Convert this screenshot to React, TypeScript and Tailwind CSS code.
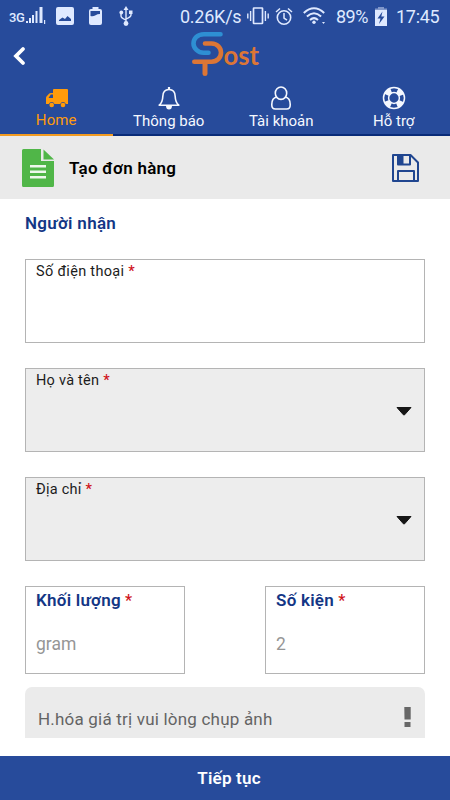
import type { ReactNode } from 'react';

function StatusBar() {
  return (
    <div className="flex h-8 items-center text-[#dfe9ff]">
      {/* Signal */}
      <span className="ml-[9px] mt-[3px] w-[17px] shrink-0 text-[13px] font-medium leading-none tracking-[-0.4px]">3G</span>
      <svg className="shrink-0" width="20" height="18" viewBox="16 0 20 18">
        <path d="M16 16v-2h2v2zM19 16v-5h2v5zM22 16V8h2v8zM25.500 16V4h2v12zM29.500 16V0h3v16zM34 13h1.200v4H34z" fill="currentColor" />
      </svg>
      {/* Screenshot saved */}
      <svg className="ml-[10px] shrink-0" width="18" height="18" viewBox="0 0 18 18">
        <path fillRule="evenodd" d="M2 0h14q2 0 2 2v14q0 2-2 2H2q-2 0-2-2V2q0-2 2-2zM3 14h12v-2l-3.500-3L9 12 6.500 10.500 3 13z" fill="currentColor" />
      </svg>
      <svg className="ml-[15px] shrink-0" width="13" height="18" viewBox="0 0 13 18">
        <path fillRule="evenodd" d="M3.500 0h6v2h1.500q2 0 2 2v12q0 2-2 2H2q-2 0-2-2V4q0-2 2-2h1.500zM1.500 4v5c3.500 1.500 5-2 9.500-2V4z" fill="currentColor" />
      </svg>
      {/* USB */}
      <svg className="ml-[17px] shrink-0" width="14" height="20" viewBox="0 0 14 20">
        <path d="M7 3v14M2 7v3q0 2 5 4M12 7v2q0 2-5 4" fill="none" stroke="currentColor" strokeWidth="1.400" />
        <path d="M7 0l2.500 4h-5zM10 4.500h3.500V8H10z" fill="currentColor" />
        <circle cx="2.300" cy="6.500" r="1.900" fill="currentColor" />
        <circle cx="7" cy="17.500" r="2.400" fill="currentColor" />
      </svg>
      <span className="ml-[47px] w-[62px] shrink-0 whitespace-nowrap text-[18px] tracking-[-0.25px]">0.26K/s</span>
      {/* Vibrate */}
      <svg className="ml-[5px] shrink-0" width="22" height="18" viewBox="0 0 22 18">
        <rect x="6.500" y="1" width="9" height="15.500" rx="0.500" fill="none" stroke="currentColor" strokeWidth="1.700" />
        <path d="M3.600 4v10M18.400 4v10M.8 6.500v5M21.200 6.500v5" stroke="currentColor" strokeWidth="1.400" />
      </svg>
      {/* Alarm */}
      <svg className="ml-[6px] shrink-0" width="18" height="19" viewBox="0 0 18 19">
        <circle cx="9" cy="10.500" r="6.700" fill="none" stroke="currentColor" strokeWidth="1.600" />
        <path d="M9 6v5l3 2.200M1 5l4-3.500M17 5l-4-3.500" fill="none" stroke="currentColor" strokeWidth="1.500" />
      </svg>
      {/* Wifi */}
      <svg className="ml-[10px] shrink-0" width="23" height="18" viewBox="0 0 23 18">
        <path d="M.8 6Q11 -3.500 21.200 6M3.900 9.500Q11 3 18.100 9.500M7 13Q11 9.300 15 13" fill="none" stroke="currentColor" strokeWidth="2" />
        <circle cx="11" cy="15.300" r="1.700" fill="currentColor" />
        <path d="M19 15h3l-1.500 2z" fill="currentColor" />
      </svg>
      <span className="ml-[10px] w-[34px] shrink-0 text-[18px] tracking-[-0.5px]">89%</span>
      <svg className="ml-[5px] shrink-0" width="12" height="19" viewBox="0 0 12 19">
        <path d="M3 0h6v1.500h3v1.500H0V1.500h3z" fill="#8197ca" />
        <path fillRule="evenodd" d="M0 3h12v16H0zM7.500 4.500L2.500 11.500h3L4 17l5.500-7.500H6.300z" fill="currentColor" />
      </svg>
      <span className="ml-[9px] text-[18px] tracking-[-0.3px]">17:45</span>
    </div>
  );
}

function Logo() {
  return (
    <svg className="absolute left-[190px] top-[-1px]" width="72" height="48" viewBox="190 31 72 48">
      <g fill="none" strokeWidth="4.600" strokeLinecap="round">
        <path d="M220.500 34.300H204C197 34.300 193.500 39 193.500 43.600S198 52.800 203.500 52.800H208.500" stroke="#2e8fd3" />
        <path d="M205 43.500H211.500C217.500 43.500 221 48 221 52.600S217.500 61.800 211.500 61.800H194.300" stroke="#dc7636" />
      </g>
      <path d="M202.500 63.500h5V74q0 2-2.500 2t-2.500-2z" fill="#dc7636" />
      <text x="223.500" y="64.500" fontFamily="Lato, sans-serif" fontWeight="700" fontSize="26" textLength="35.500" lengthAdjust="spacingAndGlyphs" fill="#dc7636">ost</text>
    </svg>
  );
}

function Tab({ label, active, children }: { label: string; active?: boolean; children: ReactNode }) {
  return (
    <div
      className={
        active
          ? 'flex flex-1 flex-col items-center border-b-2 border-[#f29b21] text-[#ff9b0b]'
          : 'flex flex-1 flex-col items-center border-b-2 border-[#092b78] text-[#f5f8ff]'
      }
    >
      <div className="flex h-[30px] items-end">{children}</div>
      <span className={active ? 'text-[15px] leading-[20px] tracking-[0.1px]' : 'mt-px text-[15px] leading-[20px]'}>{label}</span>
    </div>
  );
}

function Required() {
  return <span className="font-medium text-[#d0141c]"> *</span>;
}

function SelectField({ label }: { label: string }) {
  return (
    <div className="mt-[25px] flex h-[84px] justify-between border border-[#b4b4b4] bg-[#ededed] pl-[10px] pr-[12px]">
      <span className="mt-[2px] text-[14.500px] leading-[20px] tracking-[0.25px] text-[#1c1c1c]">{label}<Required /></span>
      <svg className="mt-[37.500px]" width="16" height="9" viewBox="0 0 16 9">
        <path d="M1 .5h14L8.600 7.800q-.6.6-1.200 0z" fill="#161616" stroke="#161616" strokeLinejoin="round" />
      </svg>
    </div>
  );
}

function SmallField({ label, value }: { label: string; value: string }) {
  return (
    <div className="h-[88px] w-[160px] border border-[#b4b4b4] bg-white pl-[10px]">
      <div className="mt-[2px] text-[17px] font-semibold leading-[22px] tracking-[0.25px] text-[#133685]">
        {label}<span className="text-[16px] font-normal"><Required /></span>
      </div>
      <div className="mt-[20px] text-[17.500px] leading-[24px] text-[#969696]">{value}</div>
    </div>
  );
}

export default function App() {
  return (
    <div className="flex h-[800px] w-[450px] flex-col overflow-hidden bg-white font-[Roboto,sans-serif]">
      <header className="flex h-[136px] shrink-0 flex-col bg-[#274b9b]">
        <StatusBar />
        <div className="relative h-12">
          <svg className="ml-[12px] mt-[14px]" width="14" height="20" viewBox="0 0 14 20">
            <path d="M11 3L4 10l7 7" fill="none" stroke="#fff" strokeWidth="3.800" strokeLinecap="round" />
          </svg>
          <Logo />
        </div>
        <nav className="flex h-14">
          <Tab label="Home" active>
            <svg className="mb-[2px] ml-px" width="22" height="19" viewBox="0 0 22 19">
              <path fillRule="evenodd" d="M8 0h13q1 0 1 1v14h-2.200a3 3 0 0 0-5.600 0H8.500a3 3 0 0 0-5.600 0H0V9q0-1 .7-1.700L3 4.800Q3.600 4 4.800 4H7V1q0-1 1-1zM2.500 9H7V5.500H4.800z" fill="currentColor" />
              <circle cx="5.700" cy="16" r="2.300" fill="currentColor" />
              <circle cx="17" cy="16" r="2.300" fill="currentColor" />
            </svg>
          </Tab>
          <Tab label="Thông báo">
            <svg width="22" height="23" viewBox="0 0 22 23">
              <path d="M1.200 18.200C4.500 15.500 4.700 12.500 4.800 9.500 4.900 5 7 2.500 11 2.500s6.100 2.500 6.200 7c.1 3 .3 6 3.600 8.700z" fill="none" stroke="currentColor" strokeWidth="1.600" strokeLinejoin="round" />
              <path d="M9.900 0h2.200v2.500H9.900zM8 19h6q-.2 3.500-3 3.500T8 19z" fill="currentColor" />
            </svg>
          </Tab>
          <Tab label="Tài khoản">
            <svg width="20" height="24" viewBox="0 0 20 24">
              <path d="M5.700 11C.5 12 .8 17 .8 19q0 4 3.500 4h11.400q3.500 0 3.500-4c0-2 .3-7-4.900-8" fill="none" stroke="currentColor" strokeWidth="1.600" />
              <ellipse cx="10" cy="7.200" rx="5.700" ry="6.200" fill="none" stroke="currentColor" strokeWidth="1.600" />
            </svg>
          </Tab>
          <Tab label="Hỗ trợ">
            <svg width="24" height="24" viewBox="0 0 24 24">
              <circle cx="12" cy="12" r="10.500" fill="none" stroke="currentColor" strokeWidth="1.500" />
              <circle cx="12" cy="12" r="5.400" fill="none" stroke="currentColor" strokeWidth="1.500" />
              <circle cx="12" cy="12" r="8" fill="none" stroke="currentColor" strokeWidth="5.600" strokeDasharray="6.283 6.283" strokeDashoffset="-3.142" />
            </svg>
          </Tab>
        </nav>
      </header>

      {/* Title */}
      <div className="flex h-[63px] shrink-0 items-center bg-[#eaeaea]">
        <svg className="ml-[22px]" width="32" height="38" viewBox="0 0 32 38">
          <path d="M1.500 0H19v12h13v24.500q0 1.500-1.500 1.500h-29Q0 38 0 36.500v-35Q0 0 1.500 0z" fill="#50b648" />
          <path d="M21.500.500L32 10.500H21.500z" fill="#50b648" />
          <path d="M8 17.200h16M8 22.700h16M8 28.200h16" stroke="#eef8ed" strokeWidth="2.400" />
        </svg>
        <h1 className="ml-[15px] mt-[2px] text-[17px] font-semibold tracking-[0.25px] text-black">Tạo đơn hàng</h1>
        <svg className="ml-auto mr-[31px]" width="27" height="28" viewBox="0 0 27 28">
          <path d="M1 1h17.500L26 8.500V27H1zM6 1v9.500h12V1M6 27V17h16v10" fill="none" stroke="#204690" strokeWidth="2" strokeLinejoin="round" />
          <path d="M6 1h5.500v9H6z" fill="#204690" />
        </svg>
      </div>

      <main className="flex flex-1 flex-col px-[25px]">
        <h2 className="mt-[13px] text-[17px] font-semibold leading-[22px] tracking-[0.3px] text-[#133685]">Người nhận</h2>
        <div className="mt-[25px] h-[84px] border border-[#b4b4b4] pl-[10px] pt-[2px]">
          <span className="block text-[14.500px] leading-[20px] tracking-[0.3px] text-[#1c1c1c]">Số điện thoại<Required /></span>
        </div>
        <SelectField label="Họ và tên" />
        <SelectField label="Địa chỉ" />
        <div className="mt-[25px] flex justify-between">
          <SmallField label="Khối lượng" value="gram" />
          <SmallField label="Số kiện" value="2" />
        </div>
        <div className="mt-[13px] flex h-[51px] justify-between rounded-t-[7px] bg-[#ebebeb] pl-[13px] pr-[14px]">
          <span className="mt-[20px] text-[17px] leading-[24px] tracking-[0.2px] text-[#646464]">H.hóa giá trị vui lòng chụp ảnh</span>
          <svg className="mt-[20px]" width="7" height="20" viewBox="0 0 7 20">
            <path d="M.3 0h6.400v12.500H.5zM.5 15h6v5h-6z" fill="#676767" />
          </svg>
        </div>
      </main>

      <button className="h-[44px] shrink-0 bg-[#274b9b] pl-[8px] pt-[2px] text-[17px] font-semibold tracking-[0.2px] text-white">Tiếp tục</button>
    </div>
  );
}
